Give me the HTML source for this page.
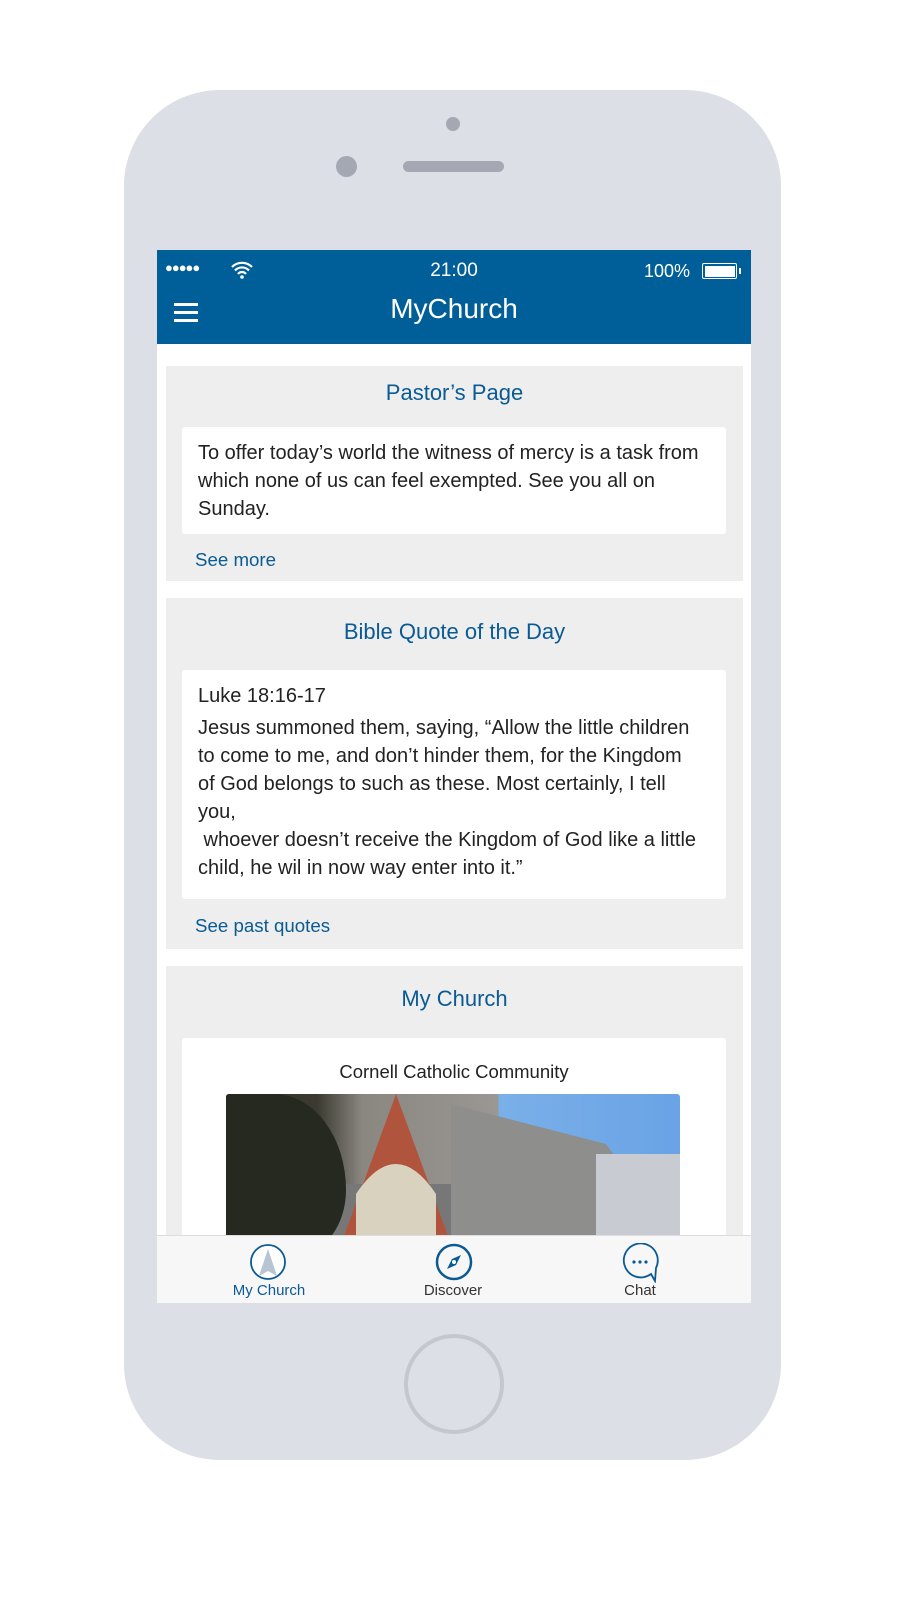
<!DOCTYPE html>
<html><head><meta charset="utf-8"><style>
*{margin:0;padding:0;box-sizing:border-box}
body{width:924px;height:1600px;background:#fff;position:relative;font-family:"Liberation Sans",sans-serif;overflow:hidden}
.phone{position:absolute;left:124px;top:90px;width:657px;height:1370px;background:#dcdfe6;border-radius:96px}
.abs{position:absolute}
.screen{position:absolute;left:157px;top:250px;width:594px;height:1053px;background:#fff;overflow:hidden}
.hdr{position:absolute;left:0;top:0;width:594px;height:94px;background:#005f98;color:#fff}
.card{position:absolute;left:9px;width:577px;background:#eeeeee}
.ct{position:absolute;width:100%;text-align:center;color:#0a5a94;font-size:22px}
.inner{position:absolute;left:16px;width:544px;background:#fff;border-radius:3px;color:#222;font-size:20px;line-height:28px;padding:12px 16px}
.link{position:absolute;left:29px;color:#0a5a94;font-size:18.7px}
.tab{position:absolute;left:0;top:985px;width:594px;height:68px;background:#f7f7f7;border-top:1px solid #ddd}
.tl{position:absolute;top:46px;font-size:15px;color:#333;width:120px;text-align:center}
</style></head><body>
<div class="phone"></div>
<div class="abs" style="left:446px;top:117px;width:14px;height:14px;border-radius:50%;background:#a4a8b3"></div>
<div class="abs" style="left:336px;top:156px;width:21px;height:21px;border-radius:50%;background:#a4a8b3"></div>
<div class="abs" style="left:403px;top:161px;width:101px;height:11px;border-radius:6px;background:#a4a8b3"></div>
<div class="abs" style="left:404px;top:1334px;width:100px;height:100px;border-radius:50%;border:4px solid #c4c7d0"></div>
<div class="screen">
 <div class="hdr">
  <div class="abs" style="left:8px;top:10px;font-size:13px;letter-spacing:-1px">●●●●●</div>
  <svg class="abs" style="left:73px;top:11px" width="24" height="18" viewBox="0 0 24 18"><path d="M2 6a14 14 0 0 1 20 0M5 9.5a9.5 9.5 0 0 1 14 0M8 13a5 5 0 0 1 8 0" stroke="#fff" stroke-width="2.2" fill="none"/><circle cx="12" cy="16" r="1.8" fill="#fff"/></svg>
  <div class="abs" style="left:0;width:594px;top:10px;text-align:center;font-size:19px">21:00</div>
  <div class="abs" style="left:487px;top:11px;font-size:18px">100%</div>
  <div class="abs" style="left:545px;top:13px;width:35px;height:16px;border:1.5px solid #fff;border-radius:2px;padding:1.5px"><div style="width:100%;height:100%;background:#fff"></div></div>
  <div class="abs" style="left:582px;top:18px;width:2px;height:6px;background:#fff"></div>
  <div class="abs" style="left:17px;top:53px;width:24px;height:3px;background:#fff;box-shadow:0 8px 0 #fff,0 16px 0 #fff"></div>
  <div class="abs" style="left:0;width:594px;top:43px;text-align:center;font-size:28px">MyChurch</div>
 </div>
 <div class="card" style="top:116px;height:215px">
  <div class="ct" style="top:14px">Pastor’s Page</div>
  <div class="inner" style="top:61px;height:107px">To offer today’s world the witness of mercy is a task from which none of us can feel exempted. See you all on Sunday.</div>
  <div class="link" style="top:183px">See more</div>
 </div>
 <div class="card" style="top:348px;height:351px">
  <div class="ct" style="top:21px">Bible Quote of the Day</div>
  <div class="inner" style="top:72px;height:229px;white-space:nowrap"><div style="margin-bottom:4px">Luke 18:16-17</div>Jesus summoned them, saying, “Allow the little children<br>to come to me, and don’t hinder them, for the Kingdom<br>of God belongs to such as these. Most certainly, I tell<br>you,<br>&nbsp;whoever doesn’t receive the Kingdom of God like a little<br>child, he wil in now way enter into it.”</div>
  <div class="link" style="top:317px">See past quotes</div>
 </div>
 <div class="card" style="top:716px;height:400px">
  <div class="ct" style="top:20px">My Church</div>
  <div class="inner" style="top:72px;height:400px;padding:0">
   <div style="text-align:center;font-size:18.5px;margin-top:20px">Cornell Catholic Community</div>
   <div class="abs" style="left:44px;top:56px;width:454px;height:160px;border-radius:3px;overflow:hidden;background:linear-gradient(90deg,#2e3228 0,#3a3a30 20%,#8a8780 30%,#9a9794 60%,#7ab0e8 60%,#6aa3e6 100%)">
    <div class="abs" style="left:0;top:90px;width:454px;height:60px;background:#777"></div>
    <div class="abs" style="left:0;top:0;width:120px;height:160px;background:#26291f;border-radius:0 60% 40% 0"></div>
    <svg class="abs" style="left:0;top:0" width="454" height="160"><polygon points="170,0 115,150 225,150" fill="#b0543e"/><polygon points="225,10 380,50 454,150 225,150" fill="#8e8e8c"/><path d="M130 150 L130 100 Q170 40 210 100 L210 150Z" fill="#d8d2bf"/><rect x="370" y="60" width="84" height="100" fill="#c8ccd2"/></svg>
   </div>
  </div>
 </div>
 <div class="tab">
  <svg class="abs" style="left:92px;top:7px" width="38" height="38"><circle cx="19" cy="19" r="17" fill="#fff" stroke="#0a5a94" stroke-width="1.8"/><polygon points="19,6 10,33 19,28 28,33" fill="#b8c4d2"/></svg>
  <div class="tl" style="left:52px;color:#0a5a94">My Church</div>
  <svg class="abs" style="left:278px;top:7px" width="38" height="38"><circle cx="19" cy="19" r="17" fill="none" stroke="#0a5a94" stroke-width="2.5"/><polygon points="26,12 21,22 12,26 17,16" fill="#0a5a94"/><circle cx="19" cy="19" r="2" fill="#fff"/></svg>
  <div class="tl" style="left:236px">Discover</div>
  <svg class="abs" style="left:464px;top:7px" width="40" height="40"><path d="M30 31 A17 17 0 1 1 35 25 L34 38 Z" fill="none" stroke="#0a5a94" stroke-width="1.8"/><circle cx="13" cy="19" r="1.6" fill="#0a5a94"/><circle cx="19" cy="19" r="1.6" fill="#0a5a94"/><circle cx="25" cy="19" r="1.6" fill="#0a5a94"/></svg>
  <div class="tl" style="left:423px">Chat</div>
 </div>
</div>
</body></html>
